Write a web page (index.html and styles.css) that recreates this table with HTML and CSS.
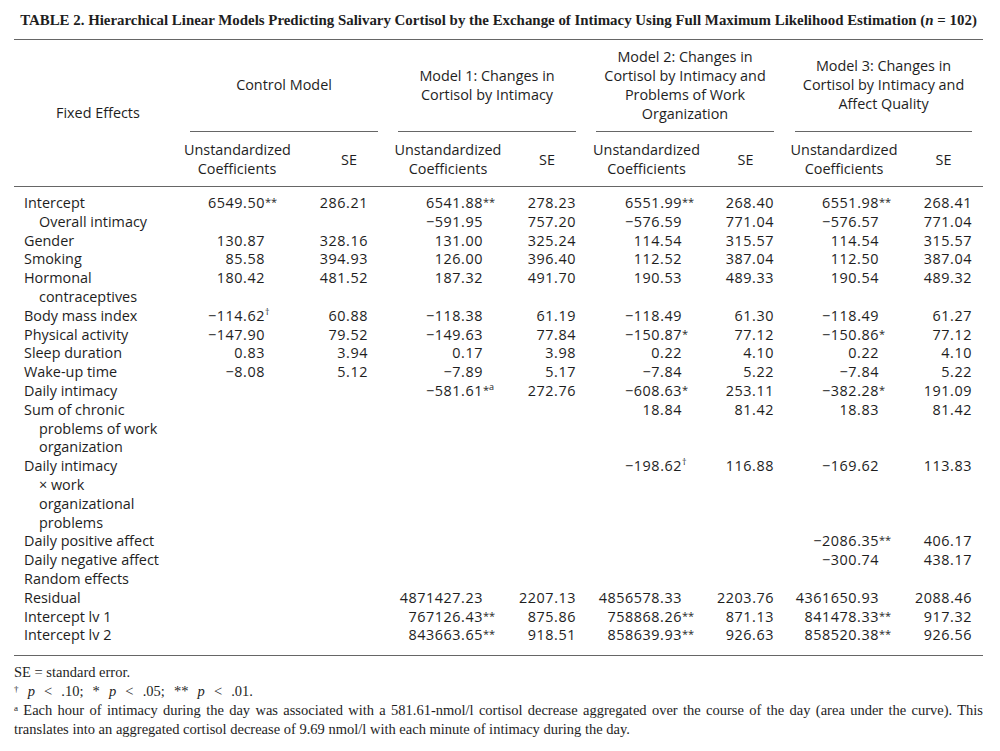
FILE: index.html
```html
<!DOCTYPE html>
<html lang="en">
<head>
<meta charset="utf-8">
<title>Table 2</title>
<link rel="stylesheet" href="styles.css">
</head>
<body>
<div class="page">
  <div class="title"><b>TABLE 2.</b> Hierarchical Linear Models Predicting Salivary Cortisol by the Exchange of Intimacy Using Full Maximum Likelihood Estimation (<i>n</i> = 102)</div>
  <table class="tbl">
    <colgroup>
      <col class="w-lab"><col class="w-c1"><col class="w-s1"><col class="w-c2"><col class="w-s2"><col class="w-c3"><col class="w-s3"><col class="w-c4"><col class="w-s4">
    </colgroup>
    <thead>
      <tr>
        <th rowspan="2" class="fe">Fixed Effects</th>
        <th colspan="2" class="grp"><div class="gbox g1">Control Model</div></th>
        <th colspan="2" class="grp"><div class="gbox">Model 1: Changes in<br>Cortisol by Intimacy</div></th>
        <th colspan="2" class="grp"><div class="gbox">Model 2: Changes in<br>Cortisol by Intimacy and<br>Problems of Work<br>Organization</div></th>
        <th colspan="2" class="grp"><div class="gbox g4">Model 3: Changes in<br>Cortisol by Intimacy and<br>Affect Quality</div></th>
      </tr>
      <tr class="subrow">
        <th class="sub">Unstandardized<br>Coefficients</th><th class="sub se1">SE</th>
        <th class="sub">Unstandardized<br>Coefficients</th><th class="sub">SE</th>
        <th class="sub">Unstandardized<br>Coefficients</th><th class="sub">SE</th>
        <th class="sub">Unstandardized<br>Coefficients</th><th class="sub">SE</th>
      </tr>
    </thead>
    <tbody>
      <tr class="first">
        <td class="lab">Intercept</td>
        <td class="c">6549.50<span class="st">**</span></td><td class="s">286.21</td>
        <td class="c">6541.88<span class="st">**</span></td><td class="s">278.23</td>
        <td class="c">6551.99<span class="st">**</span></td><td class="s">268.40</td>
        <td class="c">6551.98<span class="st">**</span></td><td class="s">268.41</td>
      </tr>
      <tr>
        <td class="lab ind">Overall intimacy</td>
        <td class="c"></td><td class="s"></td>
        <td class="c">−591.95<span class="st"></span></td><td class="s">757.20</td>
        <td class="c">−576.59<span class="st"></span></td><td class="s">771.04</td>
        <td class="c">−576.57<span class="st"></span></td><td class="s">771.04</td>
      </tr>
      <tr>
        <td class="lab">Gender</td>
        <td class="c">130.87<span class="st"></span></td><td class="s">328.16</td>
        <td class="c">131.00<span class="st"></span></td><td class="s">325.24</td>
        <td class="c">114.54<span class="st"></span></td><td class="s">315.57</td>
        <td class="c">114.54<span class="st"></span></td><td class="s">315.57</td>
      </tr>
      <tr>
        <td class="lab">Smoking</td>
        <td class="c">85.58<span class="st"></span></td><td class="s">394.93</td>
        <td class="c">126.00<span class="st"></span></td><td class="s">396.40</td>
        <td class="c">112.52<span class="st"></span></td><td class="s">387.04</td>
        <td class="c">112.50<span class="st"></span></td><td class="s">387.04</td>
      </tr>
      <tr>
        <td class="lab">Hormonal<br>contraceptives</td>
        <td class="c">180.42<span class="st"></span></td><td class="s">481.52</td>
        <td class="c">187.32<span class="st"></span></td><td class="s">491.70</td>
        <td class="c">190.53<span class="st"></span></td><td class="s">489.33</td>
        <td class="c">190.54<span class="st"></span></td><td class="s">489.32</td>
      </tr>
      <tr>
        <td class="lab">Body mass index</td>
        <td class="c">−114.62<span class="st"><sup>†</sup></span></td><td class="s">60.88</td>
        <td class="c">−118.38<span class="st"></span></td><td class="s">61.19</td>
        <td class="c">−118.49<span class="st"></span></td><td class="s">61.30</td>
        <td class="c">−118.49<span class="st"></span></td><td class="s">61.27</td>
      </tr>
      <tr>
        <td class="lab">Physical activity</td>
        <td class="c">−147.90<span class="st"></span></td><td class="s">79.52</td>
        <td class="c">−149.63<span class="st"></span></td><td class="s">77.84</td>
        <td class="c">−150.87<span class="st">*</span></td><td class="s">77.12</td>
        <td class="c">−150.86<span class="st">*</span></td><td class="s">77.12</td>
      </tr>
      <tr>
        <td class="lab">Sleep duration</td>
        <td class="c">0.83<span class="st"></span></td><td class="s">3.94</td>
        <td class="c">0.17<span class="st"></span></td><td class="s">3.98</td>
        <td class="c">0.22<span class="st"></span></td><td class="s">4.10</td>
        <td class="c">0.22<span class="st"></span></td><td class="s">4.10</td>
      </tr>
      <tr>
        <td class="lab">Wake-up time</td>
        <td class="c">−8.08<span class="st"></span></td><td class="s">5.12</td>
        <td class="c">−7.89<span class="st"></span></td><td class="s">5.17</td>
        <td class="c">−7.84<span class="st"></span></td><td class="s">5.22</td>
        <td class="c">−7.84<span class="st"></span></td><td class="s">5.22</td>
      </tr>
      <tr>
        <td class="lab">Daily intimacy</td>
        <td class="c"></td><td class="s"></td>
        <td class="c">−581.61<span class="st">*<sup>a</sup></span></td><td class="s">272.76</td>
        <td class="c">−608.63<span class="st">*</span></td><td class="s">253.11</td>
        <td class="c">−382.28<span class="st">*</span></td><td class="s">191.09</td>
      </tr>
      <tr>
        <td class="lab">Sum of chronic<br>problems of work<br>organization</td>
        <td class="c"></td><td class="s"></td>
        <td class="c"></td><td class="s"></td>
        <td class="c">18.84<span class="st"></span></td><td class="s">81.42</td>
        <td class="c">18.83<span class="st"></span></td><td class="s">81.42</td>
      </tr>
      <tr>
        <td class="lab">Daily intimacy<br>× work<br>organizational<br>problems</td>
        <td class="c"></td><td class="s"></td>
        <td class="c"></td><td class="s"></td>
        <td class="c">−198.62<span class="st"><sup>†</sup></span></td><td class="s">116.88</td>
        <td class="c">−169.62<span class="st"></span></td><td class="s">113.83</td>
      </tr>
      <tr>
        <td class="lab">Daily positive affect</td>
        <td class="c"></td><td class="s"></td>
        <td class="c"></td><td class="s"></td>
        <td class="c"></td><td class="s"></td>
        <td class="c">−2086.35<span class="st">**</span></td><td class="s">406.17</td>
      </tr>
      <tr>
        <td class="lab">Daily negative affect</td>
        <td class="c"></td><td class="s"></td>
        <td class="c"></td><td class="s"></td>
        <td class="c"></td><td class="s"></td>
        <td class="c">−300.74<span class="st"></span></td><td class="s">438.17</td>
      </tr>
      <tr>
        <td class="lab">Random effects</td>
        <td class="c"></td><td class="s"></td>
        <td class="c"></td><td class="s"></td>
        <td class="c"></td><td class="s"></td>
        <td class="c"></td><td class="s"></td>
      </tr>
      <tr>
        <td class="lab">Residual</td>
        <td class="c"></td><td class="s"></td>
        <td class="c">4871427.23<span class="st"></span></td><td class="s">2207.13</td>
        <td class="c">4856578.33<span class="st"></span></td><td class="s">2203.76</td>
        <td class="c">4361650.93<span class="st"></span></td><td class="s">2088.46</td>
      </tr>
      <tr>
        <td class="lab">Intercept lv 1</td>
        <td class="c"></td><td class="s"></td>
        <td class="c">767126.43<span class="st">**</span></td><td class="s">875.86</td>
        <td class="c">758868.26<span class="st">**</span></td><td class="s">871.13</td>
        <td class="c">841478.33<span class="st">**</span></td><td class="s">917.32</td>
      </tr>
      <tr class="last">
        <td class="lab">Intercept lv 2</td>
        <td class="c"></td><td class="s"></td>
        <td class="c">843663.65<span class="st">**</span></td><td class="s">918.51</td>
        <td class="c">858639.93<span class="st">**</span></td><td class="s">926.63</td>
        <td class="c">858520.38<span class="st">**</span></td><td class="s">926.56</td>
      </tr>
    </tbody>
  </table>
  <div class="notes">
    <p>SE = standard error.</p>
    <p class="pv"><sup>†</sup> <i>p</i> &lt; .10; * <i>p</i> &lt; .05; ** <i>p</i> &lt; .01.</p>
    <p class="long"><sup>a</sup> Each hour of intimacy during the day was associated with a 581.61-nmol/l cortisol decrease aggregated over the course of the day (area under the curve). This translates into an aggregated cortisol decrease of 9.69 nmol/l with each minute of intimacy during the day.</p>
  </div>
</div>
</body>
</html>
```
FILE: styles.css
```css
html, body {
  margin: 0;
  padding: 0;
  background: #ffffff;
}

.page {
  width: 969px;
  margin-left: 14px;
  color: #1e1e1e;
}

.title {
  font-family: "Liberation Serif", "Times New Roman", serif;
  font-weight: bold;
  font-size: 14.9px;
  text-align: center;
  height: 39px;
  line-height: 41px;
  white-space: nowrap;
}

.tbl {
  width: 969px;
  border-collapse: collapse;
  table-layout: fixed;
  font-family: "Open Sans", "Noto Sans", sans-serif;
  font-size: 14.4px;
  border-top: 1.5px solid #666;
  border-bottom: 1.5px solid #666;
}

.w-lab { width: 170px; }
.w-c1 { width: 106px; }
.w-s1 { width: 98px; }
.w-c2 { width: 120px; }
.w-s2 { width: 78px; }
.w-c3 { width: 121px; }
.w-s3 { width: 77px; }
.w-c4 { width: 120px; }
.w-s4 { width: 79px; }

.tbl th {
  font-weight: normal;
  line-height: 19px;
  padding: 0;
}

.fe {
  text-align: left;
  padding-left: 42px !important;
  padding-bottom: 2px !important;
  vertical-align: middle;
  border-bottom: 1.5px solid #666;
}

.grp {
  vertical-align: bottom;
}

.gbox {
  height: 92px;
  margin: 0 10px;
  display: flex;
  flex-direction: column;
  justify-content: center;
  align-items: center;
  text-align: center;
  border-bottom: 1.5px solid #666;
  box-sizing: border-box;
  padding-bottom: 2px;
}

.gbox.g1 {
  margin-left: 6px;
}

.gbox.g4 {
  margin-left: 11px;
  margin-right: 11px;
}

.subrow th {
  height: 54px;
  vertical-align: middle;
  text-align: center;
  border-bottom: 1.5px solid #666;
}

.sub.se1 {
  padding-left: 20px;
}

.tbl td {
  padding: 0;
  line-height: 18.8px;
  vertical-align: top;
  white-space: nowrap;
}

.tbl tr.first td {
  padding-top: 7px;
}

.tbl tr.last td {
  padding-bottom: 10px;
}

.lab {
  padding-left: 25px !important;
  text-indent: -15px;
  text-align: left;
}

.lab.ind {
  text-indent: 0;
}

.c {
  text-align: right;
  padding-right: 11px !important;
  letter-spacing: 0.55px;
}

.st {
  display: inline-block;
  width: 14px;
  text-align: left;
  font-size: 11px;
  vertical-align: top;
  line-height: 16px;
  letter-spacing: 0;
}

.st sup {
  font-size: 9px;
  vertical-align: top;
  line-height: 12px;
  position: relative;
  top: -1px;
}

.s {
  text-align: right;
  letter-spacing: 0.55px;
}

.tbl td.s:nth-child(3) { padding-right: 20px; }
.tbl td.s:nth-child(5) { padding-right: 10px; }
.tbl td.s:nth-child(7) { padding-right: 10px; }
.tbl td.s:nth-child(9) { padding-right: 11px; }

.notes {
  font-family: "Liberation Serif", "Times New Roman", serif;
  font-size: 14.5px;
  line-height: 19px;
  padding-top: 7px;
}

.notes p {
  margin: 0;
}

.notes .pv {
  word-spacing: 5.5px;
}

.notes sup {
  font-size: 9px;
  vertical-align: baseline;
  position: relative;
  top: -4px;
  line-height: 0;
}

.notes .long {
  text-align: justify;
}
```
